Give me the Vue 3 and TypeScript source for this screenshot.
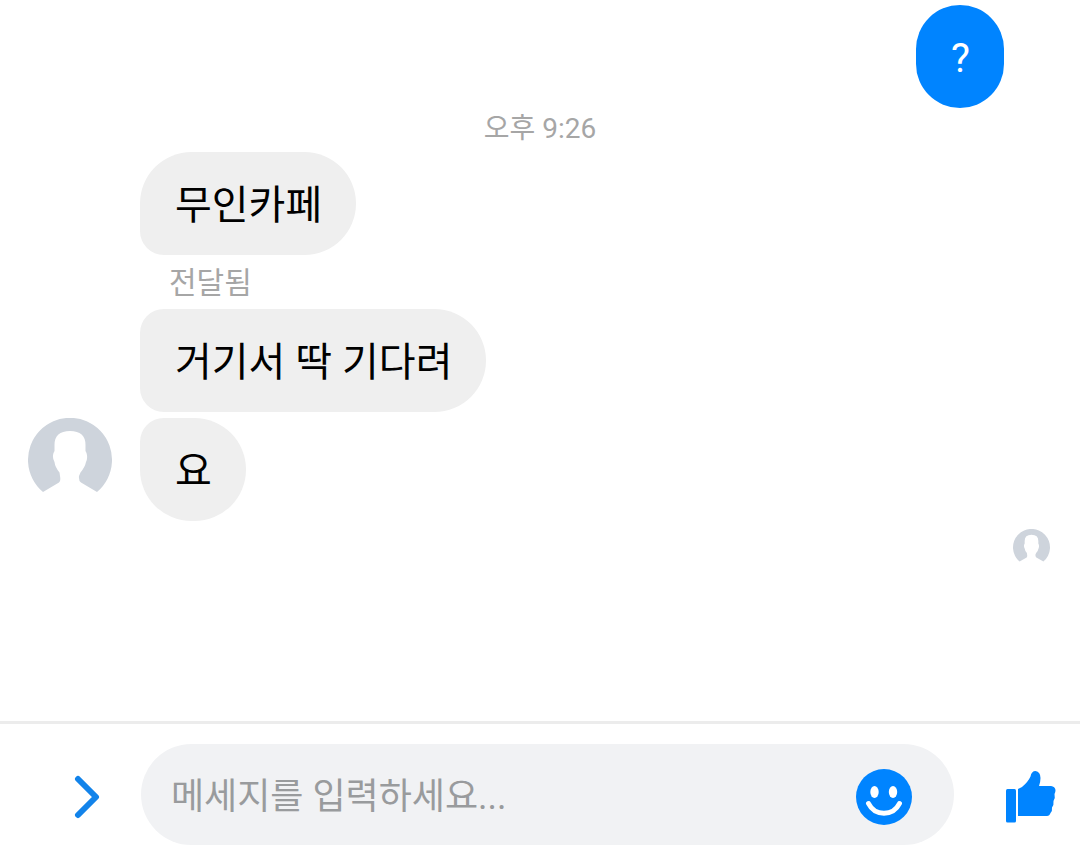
<script setup lang="ts">
import { ref } from 'vue'

interface Message {
  id: number
  text: string
  shape: 'first' | 'middle' | 'last'
  status?: string
}

const draft = ref('')
const messages: Message[] = [
  { id: 1, text: '무인카페', shape: 'first', status: '전달됨' },
  { id: 2, text: '거기서 딱 기다려', shape: 'middle' },
  { id: 3, text: '요', shape: 'last' },
]
const silhouette =
  'M15 74A42 42 0 1 1 69 74L53 64.500Q50.500 63 51 58L52.500 54.500Q57 49 58 44Q60 40 58.500 35L57.500 33V27Q57.500 13 42 13Q26.500 13 26.500 27V33L25.500 35Q24 40 26.500 44Q27 49 31.500 54.500L32 58Q33 63 31 64.500Z'
</script>

<template>
  <div class="app">
    <main class="thread">
      <div class="sent-row">
        <p class="bubble sent">?</p>
      </div>
      <time class="stamp" datetime="21:26">오후 9:26</time>

      <div v-for="m in messages" :key="m.id" class="received-row">
        <div class="avatar-slot">
          <svg v-if="m.shape === 'last'" class="avatar" viewBox="0 0 84 84" aria-hidden="true">
            <path :d="silhouette" />
          </svg>
        </div>
        <div>
          <p class="bubble received" :class="m.shape">{{ m.text }}</p>
          <p v-if="m.status" class="status">{{ m.status }}</p>
        </div>
      </div>

      <div class="receipt">
        <svg class="avatar seen" viewBox="0 0 84 84" aria-hidden="true">
          <path :d="silhouette" />
        </svg>
      </div>
    </main>

    <form class="composer" @submit.prevent>
      <button class="icon-button more" type="button" aria-label="더 보기">
        <svg width="28" height="44" viewBox="0 0 28 44" aria-hidden="true">
          <path class="chevron" d="M5 4L23 22L5 40" />
        </svg>
      </button>
      <div class="field">
        <input v-model="draft" class="entry" type="text" aria-label="메세지" placeholder="메세지를 입력하세요..." />
        <button class="icon-button" type="button" aria-label="이모티콘">
          <svg width="56" height="56" viewBox="0 0 56 56" aria-hidden="true">
            <circle class="blue" cx="28" cy="28" r="28" />
            <ellipse class="white" cx="18.500" cy="23" rx="4.200" ry="6" />
            <ellipse class="white" cx="37" cy="23" rx="4.200" ry="6" />
            <path class="smile" d="M12.500 34.500C19 47.500 37 47.500 43.500 34.500" />
          </svg>
        </button>
      </div>
      <button class="icon-button like" type="button" aria-label="좋아요">
        <svg width="50" height="52" viewBox="0 0 50 52" aria-hidden="true">
          <rect class="blue" x="0" y="18" width="10" height="33.500" rx="1.500" />
          <path
            class="blue"
            d="M12 18L16 16Q22 11 24.500 5.500Q25.500 0 29.500 0Q34.500 1 34.500 7Q34.500 11 33 15H45Q49 15.500 49.500 19Q49.500 21.500 48.500 23Q49.500 27 47.500 30Q48 34 46 36.500Q46.500 40 44.500 42Q43.500 45 41 45H12Z"
          />
        </svg>
      </button>
    </form>
  </div>
</template>

<style>
body {
  margin: 0;
  background: #fff;
}
</style>

<style scoped>
.app {
  display: flex;
  flex-direction: column;
  min-height: 100vh;
  font-family: Roboto, "Noto Sans CJK KR", sans-serif;
}
.thread {
  flex: 1;
  display: flex;
  flex-direction: column;
  padding-top: 5px;
}
p {
  margin: 0;
}
.sent-row {
  display: flex;
  justify-content: flex-end;
  padding-right: 76px;
}
.bubble {
  box-sizing: border-box;
  width: fit-content;
  padding: 24px 34px 19px 35px;
  font-size: 40px;
  line-height: 60px;
}
.sent {
  border-radius: 44px;
  background: #0084ff;
  color: #fff;
}
.stamp {
  padding: 1px 0 3px;
  font-size: 28px;
  line-height: 40px;
  text-align: center;
  color: #a6a6a6;
}
.received-row {
  display: flex;
}
.received-row + .received-row {
  margin-top: 6px;
}
.avatar-slot {
  width: 112px;
  padding-right: 28px;
  box-sizing: content-box;
  display: flex;
  justify-content: flex-end;
}
.avatar {
  display: block;
  width: 84px;
  height: 84px;
  fill: #ced4dc;
}
.received {
  border-radius: 52px;
  background: #efefef;
  color: #000;
}
.first {
  border-bottom-left-radius: 24px;
}
.middle {
  border-top-left-radius: 24px;
  border-bottom-left-radius: 24px;
}
.last {
  border-top-left-radius: 24px;
}
.status {
  padding: 8px 0 0 29px;
  font-size: 30px;
  line-height: 40px;
  color: #a6a6a6;
}
.receipt {
  display: flex;
  justify-content: flex-end;
  padding: 8px 30px 0 0;
}
.seen {
  width: 37px;
  height: 37px;
}
.composer {
  display: flex;
  align-items: center;
  padding: 20px 24px 16px 0;
  border-top: 3px solid #ececec;
}
.icon-button {
  display: flex;
  flex: none;
  margin: 0;
  padding: 4px 0 0;
  border: 0;
  background: none;
  cursor: pointer;
}
.more {
  width: 141px;
  padding-left: 73px;
}
.field {
  flex: 1;
  min-width: 0;
  display: flex;
  align-items: center;
  box-sizing: border-box;
  padding: 20px 42px 20px 30px;
  border-radius: 51px;
  background: #f1f2f4;
}
.entry {
  flex: 1;
  min-width: 0;
  height: 61px;
  box-sizing: border-box;
  padding: 5px 0 0;
  border: 0;
  outline: 0;
  background: none;
  font: inherit;
  font-size: 36px;
  color: #000;
}
.entry::placeholder {
  color: #999b9d;
  opacity: 1;
}
.like {
  margin-left: 52px;
}
.blue {
  fill: #0084ff;
}
.white {
  fill: #fff;
}
.chevron,
.smile {
  fill: none;
  stroke-linecap: round;
  stroke-linejoin: round;
}
.chevron {
  stroke: #1283ea;
  stroke-width: 6px;
}
.smile {
  stroke: #fff;
  stroke-width: 5px;
}
</style>
